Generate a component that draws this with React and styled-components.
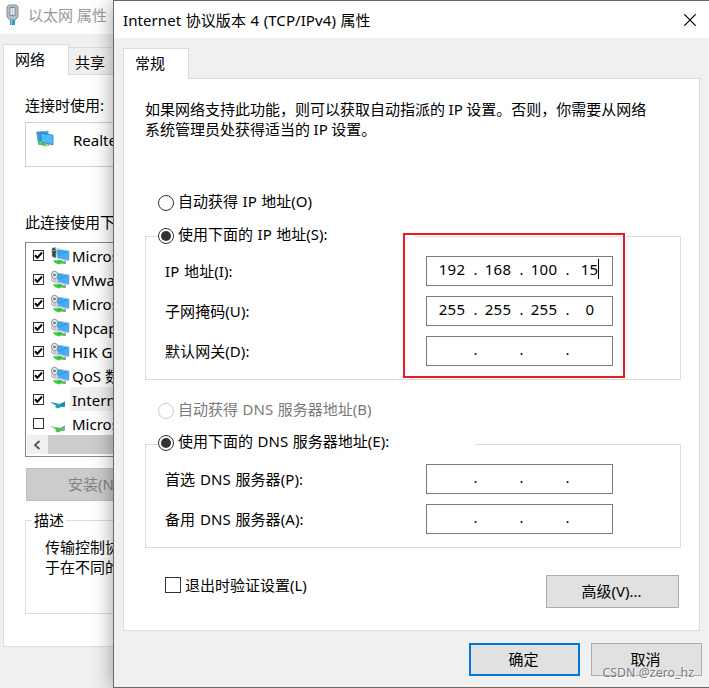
import React from 'react'
import styled, { createGlobalStyle, css } from 'styled-components'

const GlobalStyle = createGlobalStyle`
  * {
    box-sizing: border-box;
  }
  body {
    margin: 0;
    overflow: hidden;
    color: #000;
    font: 15px/20px "Noto Sans", "Noto Sans CJK SC", sans-serif;
  }
`

const Desktop = styled.div`
  position: relative;
  width: 709px;
  height: 688px;
  overflow: hidden;
  background: #f0f0f0;
  white-space: nowrap;
`

/* adapter window, behind */

const BackTitle = styled.div`
  display: flex;
  align-items: center;
  gap: 9px;
  height: 34px;
  padding: 0 0 4px 6px;
  background: #fff;
  color: #999;
`

const BackTabs = styled.div`
  display: flex;
  align-items: flex-end;
  height: 41px;
  padding-left: 3px;
`

const Tab = styled.div`
  position: relative;
  z-index: 1;
  width: 66px;
  height: 31px;
  padding: 4px 0 0 11px;
  border: 1px solid #dcdcdc;
  border-bottom: none;
  background: #fff;
`

const IdleTab = styled(Tab)`
  height: 28px;
  padding: 4px 0 0 6px;
  border-left: none;
  border-bottom: 1px solid #dcdcdc;
  background: #f0f0f0;
`

const BackPane = styled.div`
  width: 380px;
  height: 573px;
  margin: -1px 0 0 3px;
  padding: 20px 0 0 21px;
  border: 1px solid #dcdcdc;
  background: #fff;
`

const AdapterBox = styled.div`
  display: flex;
  height: 45px;
  margin: 7px 0 45px;
  padding: 7px 0 0 10px;
  gap: 19px;
  border: 1px solid #d0d0d0;
`

const ServiceList = styled.div`
  height: 215px;
  margin-top: 10px;
  padding: 0 1px;
  border: 1px solid #828790;
`

const ServiceRow = styled.div`
  display: flex;
  align-items: center;
  height: 24px;
  padding-left: 6px;
`

const ServiceIconSlot = styled.span`
  display: flex;
  margin-left: 6px;
`

const ServiceName = styled.span`
  flex: 1;
  height: 24px;
  padding: 3px 0 0 2px;
  background: ${({ $selected }) => ($selected ? '#f0f0f0' : 'transparent')};
`

const CheckBox = styled.span`
  display: flex;
  flex: none;
  width: ${({ $size }) => $size}px;
  height: ${({ $size }) => $size}px;
  border: 1px solid #333;
`

const ScrollBar = styled.div`
  display: flex;
  height: 19px;
`

const ScrollArrow = styled.div`
  display: flex;
  align-items: center;
  justify-content: center;
  width: 21px;
  padding-right: 2px;
  background: #f0f0f0;
`

const ScrollThumb = styled.div`
  flex: 1;
  background: #cdcdcd;
`

const InstallButton = styled.div`
  width: 134px;
  height: 33px;
  margin: 11px 0 0 1px;
  padding: 5px 0 0 41px;
  border: 1px solid #bfbfbf;
  background: #ccc;
  color: #838383;
`

const DescriptionBox = styled.div`
  height: 94px;
  margin-top: 19px;
  border: 1px solid #dcdcdc;
`

const DescriptionTitle = styled.div`
  width: 34px;
  margin: -11px 0 7px 6px;
  padding-left: 2px;
  background: #fff;
`

const DescriptionText = styled.div`
  padding-left: 19px;
`

/* IPv4 dialog, in front */

const Dialog = styled.div`
  position: absolute;
  z-index: 2;
  top: 0;
  left: 113px;
  width: 596px;
  height: 688px;
  border: 1px solid #696969;
  border-right: none;
  background: #f0f0f0;
  box-shadow: 0 2px 20px rgba(0, 0, 0, 0.38);
`

const TitleBar = styled.div`
  display: flex;
  align-items: center;
  justify-content: space-between;
  height: 37px;
  padding: 0 13px 0 9px;
  background: #fff;
  letter-spacing: 0.08px;
  word-spacing: 0.5px;
`

const DialogTabs = styled.div`
  padding: 10px 0 0 9px;
`

const Pane = styled.div`
  width: 577px;
  height: 553px;
  margin: -1px 0 0 9px;
  padding: 20px 0 0 21px;
  border: 1px solid #dcdcdc;
  background: #fff;
`

const Intro = styled.p`
  margin: 0 0 54px;
  word-spacing: -0.3px;
`

const RadioRow = styled.div`
  display: flex;
  align-items: center;
  gap: 4px;
  height: 20px;
  margin-left: 13px;
  color: ${({ $disabled }) => ($disabled ? '#7a7a7a' : '#000')};
`

const RadioText = styled.span`
  margin-top: -4px;
  word-spacing: 0.7px;
`

const Circle = styled.span`
  display: flex;
  align-items: center;
  justify-content: center;
  width: 16px;
  height: 16px;
  border: 1px solid ${({ $disabled }) => ($disabled ? '#ccc' : '#333')};
  border-radius: 50%;

  ${({ $checked }) =>
    $checked &&
    css`
      &::after {
        content: '';
        width: 10px;
        height: 10px;
        border-radius: 50%;
        background: #333;
      }
    `}
`

const Group = styled.div`
  position: relative;
  width: 536px;
  margin: 23px 0 ${({ $after }) => $after}px;
  padding: 0 0 13px 19px;
  border: 1px solid #dcdcdc;
`

const Legend = styled.div`
  width: ${({ $width }) => $width}px;
  margin: ${({ $lift }) => -$lift}px 0 ${({ $lift }) => $lift - 1}px -7px;
  background: #fff;

  ${RadioRow} {
    margin-left: 0;
  }
`

const Fields = styled.div`
  display: flex;
  flex-direction: column;
  gap: 10px;
`

const Field = styled.div`
  display: flex;
  align-items: center;
  height: 30px;
`

const FieldLabel = styled.span`
  width: 261px;
  letter-spacing: 0.07px;
  word-spacing: 0.8px;
`

const IpInput = styled.div`
  display: flex;
  width: 187px;
  height: 30px;
  padding: 2px 0 0 6px;
  border: 1px solid #7a7a7a;
  background: #fff;
`

const Octet = styled.span`
  display: flex;
  justify-content: center;
  width: 38px;
  height: 20px;
  letter-spacing: 0.25px;
`

const Dot = styled.span`
  width: 8px;
  padding-left: 1px;
  text-align: center;
`

const Caret = styled.span`
  width: 1px;
  height: 20px;
  background: #000;
`

const Highlight = styled.div`
  position: absolute;
  top: -4px;
  left: 257px;
  width: 222px;
  height: 145px;
  border: 2px solid #ed1c24;
`

const PaneFooter = styled.div`
  display: flex;
  align-items: flex-start;
  justify-content: space-between;
  padding: 0 20px;
`

const CheckLabel = styled.div`
  display: flex;
  align-items: center;
  gap: 4px;
  height: 20px;
`

const Button = styled.button`
  width: ${({ $width }) => $width || 111}px;
  height: 33px;
  padding: 0 2px 2px 0;
  border: ${({ $primary }) => ($primary ? '2px solid #0078d7' : '1px solid #adadad')};
  background: #e1e1e1;
  color: #000;
  font: inherit;
`

const DialogFooter = styled.div`
  display: flex;
  justify-content: flex-end;
  gap: 11px;
  padding: 12px 7px 0 0;
`

const Watermark = styled.div`
  position: absolute;
  z-index: 3;
  right: 15px;
  bottom: 7px;
  color: rgba(110, 110, 110, 0.9);
  font: 12.4px/16px "Noto Sans", sans-serif;
  text-shadow: 1px 1px 0 #fff;
`

const services = [
  { name: 'Microsoft', icon: 'client', checked: true },
  { name: 'VMware', icon: 'service', checked: true },
  { name: 'Microsoft', icon: 'service', checked: true },
  { name: 'Npcap', icon: 'service', checked: true },
  { name: 'HIK G', icon: 'service', checked: true },
  { name: 'QoS 数据包', icon: 'service', checked: true },
  { name: 'Internet', icon: 'protocol', checked: true, selected: true },
  { name: 'Microsoft', icon: 'protocol' },
]

const PlugIcon = () => (
  <svg width="13" height="22" viewBox="0 0 13 22">
    <path d="M2.5 1h8L12 3v10l-3 3H4l-3-3V3z" fill="#b4bec8" stroke="#8793a0" />
    <path d="M4 3.5h5v8H4z" fill="#eef2f5" stroke="#7e8a96" />
    <path d="M6.5 4v7" stroke="#b4bec6" />
    <path d="M4 16h5v5H4z" fill="#2f9fc4" />
    <path d="M5.5 16v5" stroke="#8ed3e8" />
  </svg>
)

const AdapterIcon = () => (
  <svg width="18" height="18" viewBox="0 0 18 18">
    <path d="M2 12l7 1 2 3.5-9-2z" fill="#46c34c" />
    <path d="M10 13l4-1-1 4-2-.5z" fill="#9aa7a0" />
    <path d="M.6 2l11.5-.8V11L2 12z" fill="#2b9fe6" stroke="#6f9dbb" strokeWidth=".8" />
    <path d="M4.5 3.2l12.5 2v9.6L5.5 12z" fill="#4bbcfb" stroke="#3679a3" strokeWidth=".8" />
  </svg>
)

const ServiceIcon = ({ kind, selected }) => {
  if (kind === 'protocol') {
    return (
      <svg width="20" height="20" viewBox="0 0 20 20">
        <path d="M.5 13.5l5 .5 4 1 5.500-2.500v5L11 18l-3 1.500L5 18l1-1.500z" fill={selected ? '#259fac' : '#45c84a'} />
        <path d="M10 16l5-3.500v5l-2 .5z" fill={selected ? '#2389ad' : '#7fb488'} />
        <path d="M.5 13.5l5 .5-.5 2z" fill={selected ? '#3797d8' : '#b8c4ba'} />
      </svg>
    )
  }
  return (
    <svg width="20" height="20" viewBox="0 0 20 20">
      <path d="M3 15l4 .5 2-1 6 2V19l-4-.5-2 1L5 18z" fill="#3cc642" />
      <path d="M12 16.5l4-1.5v4l-3-.5z" fill="#91a799" />
      <path d="M6.5 4L19 6v9.5L7.5 13z" fill="#36a3f4" stroke="#9cb4c4" strokeWidth=".8" />
      <path d="M8 12l10.5-5v8z" fill="#62bdfb" opacity=".4" />
      {kind === 'client' ? (
        <>
          <path d="M2 3l4-.5V13l-4-1.5z" fill="#38434a" stroke="#a0aab0" strokeWidth=".7" />
          <path d="M3 5.5h2" stroke="#62d86d" />
          <path d="M5 2.5L13 4v1H6z" fill="#d0d7db" />
        </>
      ) : (
        <>
          <path d="M4 8l4.500 3L8 15l-4-1-3-3z" fill="#c9d1d7" />
          <ellipse cx="4.5" cy="6" rx="3.2" ry="3.8" fill="#e1e5e8" stroke="#89959e" />
          <circle cx="4.5" cy="6" r="1.3" fill="#68757e" />
          <circle cx="2.8" cy="11" r="1.5" fill="#e3e8eb" stroke="#9ba6ad" strokeWidth=".7" />
        </>
      )}
    </svg>
  )
}

const CheckMark = () => (
  <svg width="9" height="9" viewBox="0 0 9 9">
    <path d="M1 4.2l2.4 2.6L8 1.5" fill="none" stroke="#000" strokeWidth="2" />
  </svg>
)

const Radio = ({ children, checked, disabled }) => (
  <RadioRow $disabled={disabled}>
    <Circle $checked={checked} $disabled={disabled} />
    <RadioText>{children}</RadioText>
  </RadioRow>
)

const IpField = ({ label, value = ['', '', '', ''], focused }) => (
  <Field>
    <FieldLabel>{label}</FieldLabel>
    <IpInput>
      {value.map((part, i) => (
        <React.Fragment key={i}>
          {i > 0 && <Dot>.</Dot>}
          <Octet>
            {part}
            {focused && i === 3 && <Caret />}
          </Octet>
        </React.Fragment>
      ))}
    </IpInput>
  </Field>
)

const AdapterWindow = () => (
  <>
    <BackTitle>
      <PlugIcon />
      以太网 属性
    </BackTitle>
    <BackTabs>
      <Tab>网络</Tab>
      <IdleTab>共享</IdleTab>
    </BackTabs>
    <BackPane>
      <div>连接时使用:</div>
      <AdapterBox>
        <AdapterIcon />
        Realtek
      </AdapterBox>
      <div>此连接使用下列项目:</div>
      <ServiceList>
        {services.map(({ name, icon, checked, selected }, i) => (
          <ServiceRow key={i}>
            <CheckBox $size={11}>{checked && <CheckMark />}</CheckBox>
            <ServiceIconSlot>
              <ServiceIcon kind={icon} selected={selected} />
            </ServiceIconSlot>
            <ServiceName $selected={selected}>{name}</ServiceName>
          </ServiceRow>
        ))}
        <ScrollBar>
          <ScrollArrow>
            <svg width="8" height="10" viewBox="0 0 8 10">
              <path d="M6.5 1L2 5l4.5 4" fill="none" stroke="#555" strokeWidth="1.8" />
            </svg>
          </ScrollArrow>
          <ScrollThumb />
        </ScrollBar>
      </ServiceList>
      <InstallButton>安装(N)...</InstallButton>
      <DescriptionBox>
        <DescriptionTitle>描述</DescriptionTitle>
        <DescriptionText>
          传输控制协议
          <br />
          于在不同的相
        </DescriptionText>
      </DescriptionBox>
    </BackPane>
  </>
)

export default function App() {
  return (
    <Desktop>
      <GlobalStyle />
      <AdapterWindow />
      <Dialog>
        <TitleBar>
          Internet 协议版本 4 (TCP/IPv4) 属性
          <svg width="12" height="12" viewBox="0 0 12 12">
            <path d="M.3.3l11.4 11.4M11.7.3L.3 11.7" stroke="#000" strokeWidth="1.2" />
          </svg>
        </TitleBar>
        <DialogTabs>
          <Tab>常规</Tab>
        </DialogTabs>
        <Pane>
          <Intro>
            如果网络支持此功能，则可以获取自动指派的 IP 设置。否则，你需要从网络
            <br />
            系统管理员处获得适当的 IP 设置。
          </Intro>
          <Radio>自动获得 IP 地址(O)</Radio>
          <Group $after={21}>
            <Legend $width={257} $lift={11}>
              <Radio checked>使用下面的 IP 地址(S):</Radio>
            </Legend>
            <Fields>
              <IpField label="IP 地址(I):" value={['192', '168', '100', '15']} focused />
              <IpField label="子网掩码(U):" value={['255', '255', '255', '0']} />
              <IpField label="默认网关(D):" />
            </Fields>
            <Highlight />
          </Group>
          <Radio disabled>自动获得 DNS 服务器地址(B)</Radio>
          <Group $after={27}>
            <Legend $width={317} $lift={12}>
              <Radio checked>使用下面的 DNS 服务器地址(E):</Radio>
            </Legend>
            <Fields>
              <IpField label="首选 DNS 服务器(P):" />
              <IpField label="备用 DNS 服务器(A):" />
            </Fields>
          </Group>
          <PaneFooter>
            <CheckLabel>
              <CheckBox $size={16} />
              退出时验证设置(L)
            </CheckLabel>
            <Button $width={133}>高级(V)...</Button>
          </PaneFooter>
        </Pane>
        <DialogFooter>
          <Button $primary>确定</Button>
          <Button>取消</Button>
        </DialogFooter>
      </Dialog>
      <Watermark>CSDN @zero_hz</Watermark>
    </Desktop>
  )
}
